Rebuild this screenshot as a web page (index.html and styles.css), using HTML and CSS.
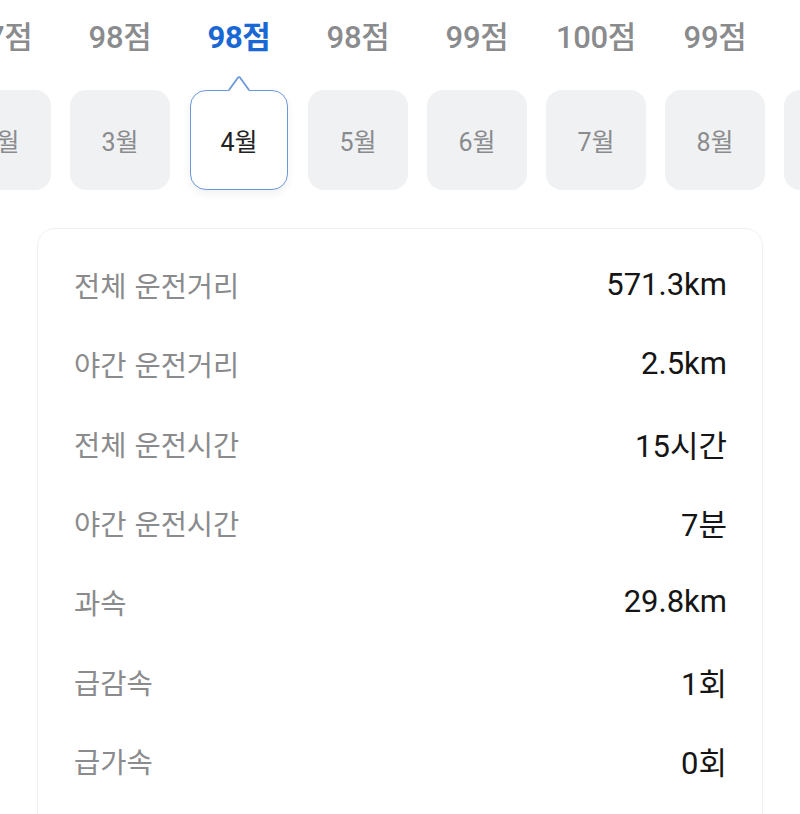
FILE: index.html
```html
<!DOCTYPE html>
<html lang="ko">
<head>
<meta charset="utf-8">
<link rel="stylesheet" href="styles.css">
</head>
<body>
<div class="page">
  <div class="strip">
    <div class="col"><div class="score">97점</div><div class="month">2월</div></div>
    <div class="col"><div class="score">98점</div><div class="month">3월</div></div>
    <div class="col active"><div class="score">98점</div><div class="month"><svg class="tip" width="24" height="16" viewBox="0 0 24 16"><path d="M2 16 L10.5 3.2 Q12 1.2 13.5 3.2 L22 16 Z" fill="#fff"/><path d="M2 15 L10.5 3.2 Q12 1.2 13.5 3.2 L22 15" fill="none" stroke="#6b98d9" stroke-width="1.8"/></svg>4월</div></div>
    <div class="col"><div class="score">98점</div><div class="month">5월</div></div>
    <div class="col"><div class="score">99점</div><div class="month">6월</div></div>
    <div class="col"><div class="score">100점</div><div class="month">7월</div></div>
    <div class="col"><div class="score">99점</div><div class="month">8월</div></div>
    <div class="col"><div class="score"></div><div class="month">9월</div></div>
  </div>
  <div class="card">
    <div class="row"><span class="label">전체 운전거리</span><span class="value">571.3km</span></div>
    <div class="row"><span class="label">야간 운전거리</span><span class="value">2.5km</span></div>
    <div class="row"><span class="label">전체 운전시간</span><span class="value">15시간</span></div>
    <div class="row"><span class="label">야간 운전시간</span><span class="value">7분</span></div>
    <div class="row"><span class="label">과속</span><span class="value">29.8km</span></div>
    <div class="row"><span class="label">급감속</span><span class="value">1회</span></div>
    <div class="row"><span class="label">급가속</span><span class="value">0회</span></div>
  </div>
</div>
</body>
</html>
```
FILE: styles.css
```css
html, body {
  margin: 0;
  padding: 0;
  background: #fff;
}
body {
  font-family: Roboto, "Noto Sans CJK KR", sans-serif;
  width: 800px;
  height: 814px;
  overflow: hidden;
}
.page {
  width: 800px;
  height: 814px;
  overflow: hidden;
}
.strip {
  display: flex;
  gap: 19px;
  margin-left: -49px;
  padding-top: 18px;
}
.col {
  flex: 0 0 100px;
  display: flex;
  flex-direction: column;
  align-items: center;
}
.score {
  font-size: 31px;
  font-weight: 500;
  color: #8a8b8d;
  line-height: 40px;
  height: 40px;
  white-space: nowrap;
  letter-spacing: -0.3px;
}
.month {
  margin-top: 32px;
  width: 100px;
  height: 100px;
  box-sizing: border-box;
  border-radius: 16px;
  background: #f0f1f3;
  display: flex;
  align-items: center;
  justify-content: center;
  font-size: 25px;
  color: #8a8b8d;
  position: relative;
}
.active .score {
  color: #1a68d4;
  font-weight: 700;
}
.active .month {
  width: 98px;
  background: #fff;
  border: 1.8px solid #6b98d9;
  color: #222;
  box-shadow: 0 4px 8px rgba(0, 0, 0, 0.06);
}
.tip {
  position: absolute;
  left: 36px;
  top: -16px;
}
.card {
  margin: 38px 37px 0 37px;
  border: 1px solid #efefef;
  border-radius: 18px;
  padding: 16px 35px 0 36px;
  height: 620px;
}
.row {
  display: flex;
  justify-content: space-between;
  align-items: center;
  height: 79.3px;
}
.label {
  font-size: 28.5px;
  color: #8a8b8d;
  font-family: "Noto Sans CJK KR", sans-serif;
}
.value {
  font-size: 31px;
  color: #151515;
  font-family: Roboto, "Noto Sans CJK KR", sans-serif;
}
```
